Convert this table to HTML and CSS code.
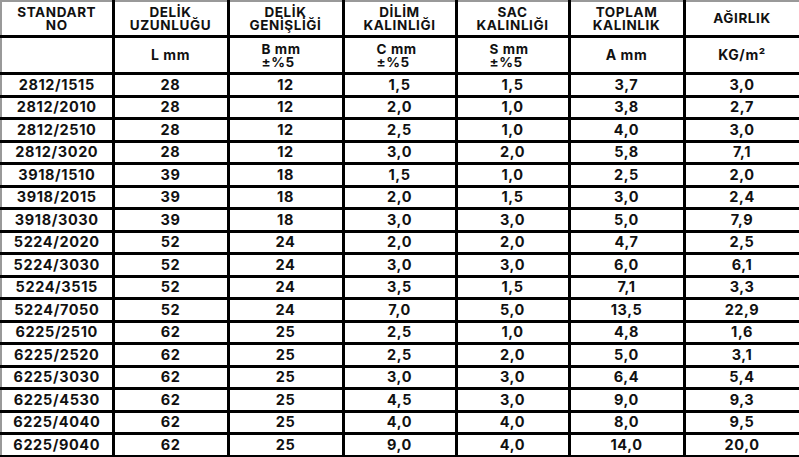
FILE: index.html
```html
<!DOCTYPE html>
<html lang="tr">
<head>
<meta charset="utf-8">
<link rel="stylesheet" href="styles.css">
</head>
<body>
<table class="spec">
<colgroup>
<col class="c1"><col class="c2"><col class="c3"><col class="c4"><col class="c5"><col class="c6"><col class="c7">
</colgroup>
<thead>
<tr class="h1">
<th>STANDART<br>NO</th>
<th>DELİK<br>UZUNLUĞU</th>
<th>DELİK<br>GENİŞLİĞİ</th>
<th>DİLİM<br>KALINLIĞI</th>
<th>SAC<br>KALINLIĞI</th>
<th>TOPLAM<br>KALINLIK</th>
<th>AĞIRLIK</th>
</tr>
<tr class="h2">
<th></th>
<th>L mm</th>
<th class="two">B mm<br>±%5</th>
<th class="two">C mm<br>±%5</th>
<th class="two">S mm<br>±%5</th>
<th>A mm</th>
<th>KG/m²</th>
</tr>
</thead>
<tbody>
<tr><td>2812/1515</td><td>28</td><td>12</td><td>1,5</td><td>1,5</td><td>3,7</td><td>3,0</td></tr>
<tr><td>2812/2010</td><td>28</td><td>12</td><td>2,0</td><td>1,0</td><td>3,8</td><td>2,7</td></tr>
<tr><td>2812/2510</td><td>28</td><td>12</td><td>2,5</td><td>1,0</td><td>4,0</td><td>3,0</td></tr>
<tr><td>2812/3020</td><td>28</td><td>12</td><td>3,0</td><td>2,0</td><td>5,8</td><td>7,1</td></tr>
<tr><td>3918/1510</td><td>39</td><td>18</td><td>1,5</td><td>1,0</td><td>2,5</td><td>2,0</td></tr>
<tr><td>3918/2015</td><td>39</td><td>18</td><td>2,0</td><td>1,5</td><td>3,0</td><td>2,4</td></tr>
<tr><td>3918/3030</td><td>39</td><td>18</td><td>3,0</td><td>3,0</td><td>5,0</td><td>7,9</td></tr>
<tr><td>5224/2020</td><td>52</td><td>24</td><td>2,0</td><td>2,0</td><td>4,7</td><td>2,5</td></tr>
<tr><td>5224/3030</td><td>52</td><td>24</td><td>3,0</td><td>3,0</td><td>6,0</td><td>6,1</td></tr>
<tr><td>5224/3515</td><td>52</td><td>24</td><td>3,5</td><td>1,5</td><td>7,1</td><td>3,3</td></tr>
<tr><td>5224/7050</td><td>52</td><td>24</td><td>7,0</td><td>5,0</td><td>13,5</td><td>22,9</td></tr>
<tr><td>6225/2510</td><td>62</td><td>25</td><td>2,5</td><td>1,0</td><td>4,8</td><td>1,6</td></tr>
<tr><td>6225/2520</td><td>62</td><td>25</td><td>2,5</td><td>2,0</td><td>5,0</td><td>3,1</td></tr>
<tr><td>6225/3030</td><td>62</td><td>25</td><td>3,0</td><td>3,0</td><td>6,4</td><td>5,4</td></tr>
<tr><td>6225/4530</td><td>62</td><td>25</td><td>4,5</td><td>3,0</td><td>9,0</td><td>9,3</td></tr>
<tr><td>6225/4040</td><td>62</td><td>25</td><td>4,0</td><td>4,0</td><td>8,0</td><td>9,5</td></tr>
<tr><td>6225/9040</td><td>62</td><td>25</td><td>9,0</td><td>4,0</td><td>14,0</td><td>20,0</td></tr>
</tbody>
</table>
</body>
</html>
```
FILE: styles.css
```css
html, body {
  margin: 0;
  padding: 0;
  background: #fff;
}
body {
  font-family: "Inter", "Noto Sans", sans-serif;
  color: #111;
}
.spec {
  border-collapse: collapse;
  table-layout: fixed;
  width: 799px;
  border-top: 2px solid #999;
  border-left: 2px solid #999;
}
.c1 { width: 112px; }
.c2 { width: 115px; }
.c3 { width: 115px; }
.c4 { width: 113px; }
.c5 { width: 113px; }
.c6 { width: 115px; }
.c7 { width: 116px; }
.spec th, .spec td {
  border: 3px solid #000;
  padding: 0;
  text-align: center;
  font-weight: 700;
  letter-spacing: 0.6px;
}
.spec tr:first-child th { border-top: none; }
.spec th:first-child, .spec td:first-child { border-left: none; }
.h1 th {
  height: 33px;
  font-size: 13.5px;
  line-height: 12.5px;
  padding-top: 0;
}
.h2 th {
  height: 33px;
  font-size: 14px;
  line-height: 12.5px;
}
.h2 th.two {
  text-align: left;
  padding-left: 32px;
  padding-top: 1px;
  font-size: 13.5px;
  line-height: 13px;
}
.spec td {
  height: 19.5px;
  font-size: 14.5px;
  line-height: 16px;
}
```
